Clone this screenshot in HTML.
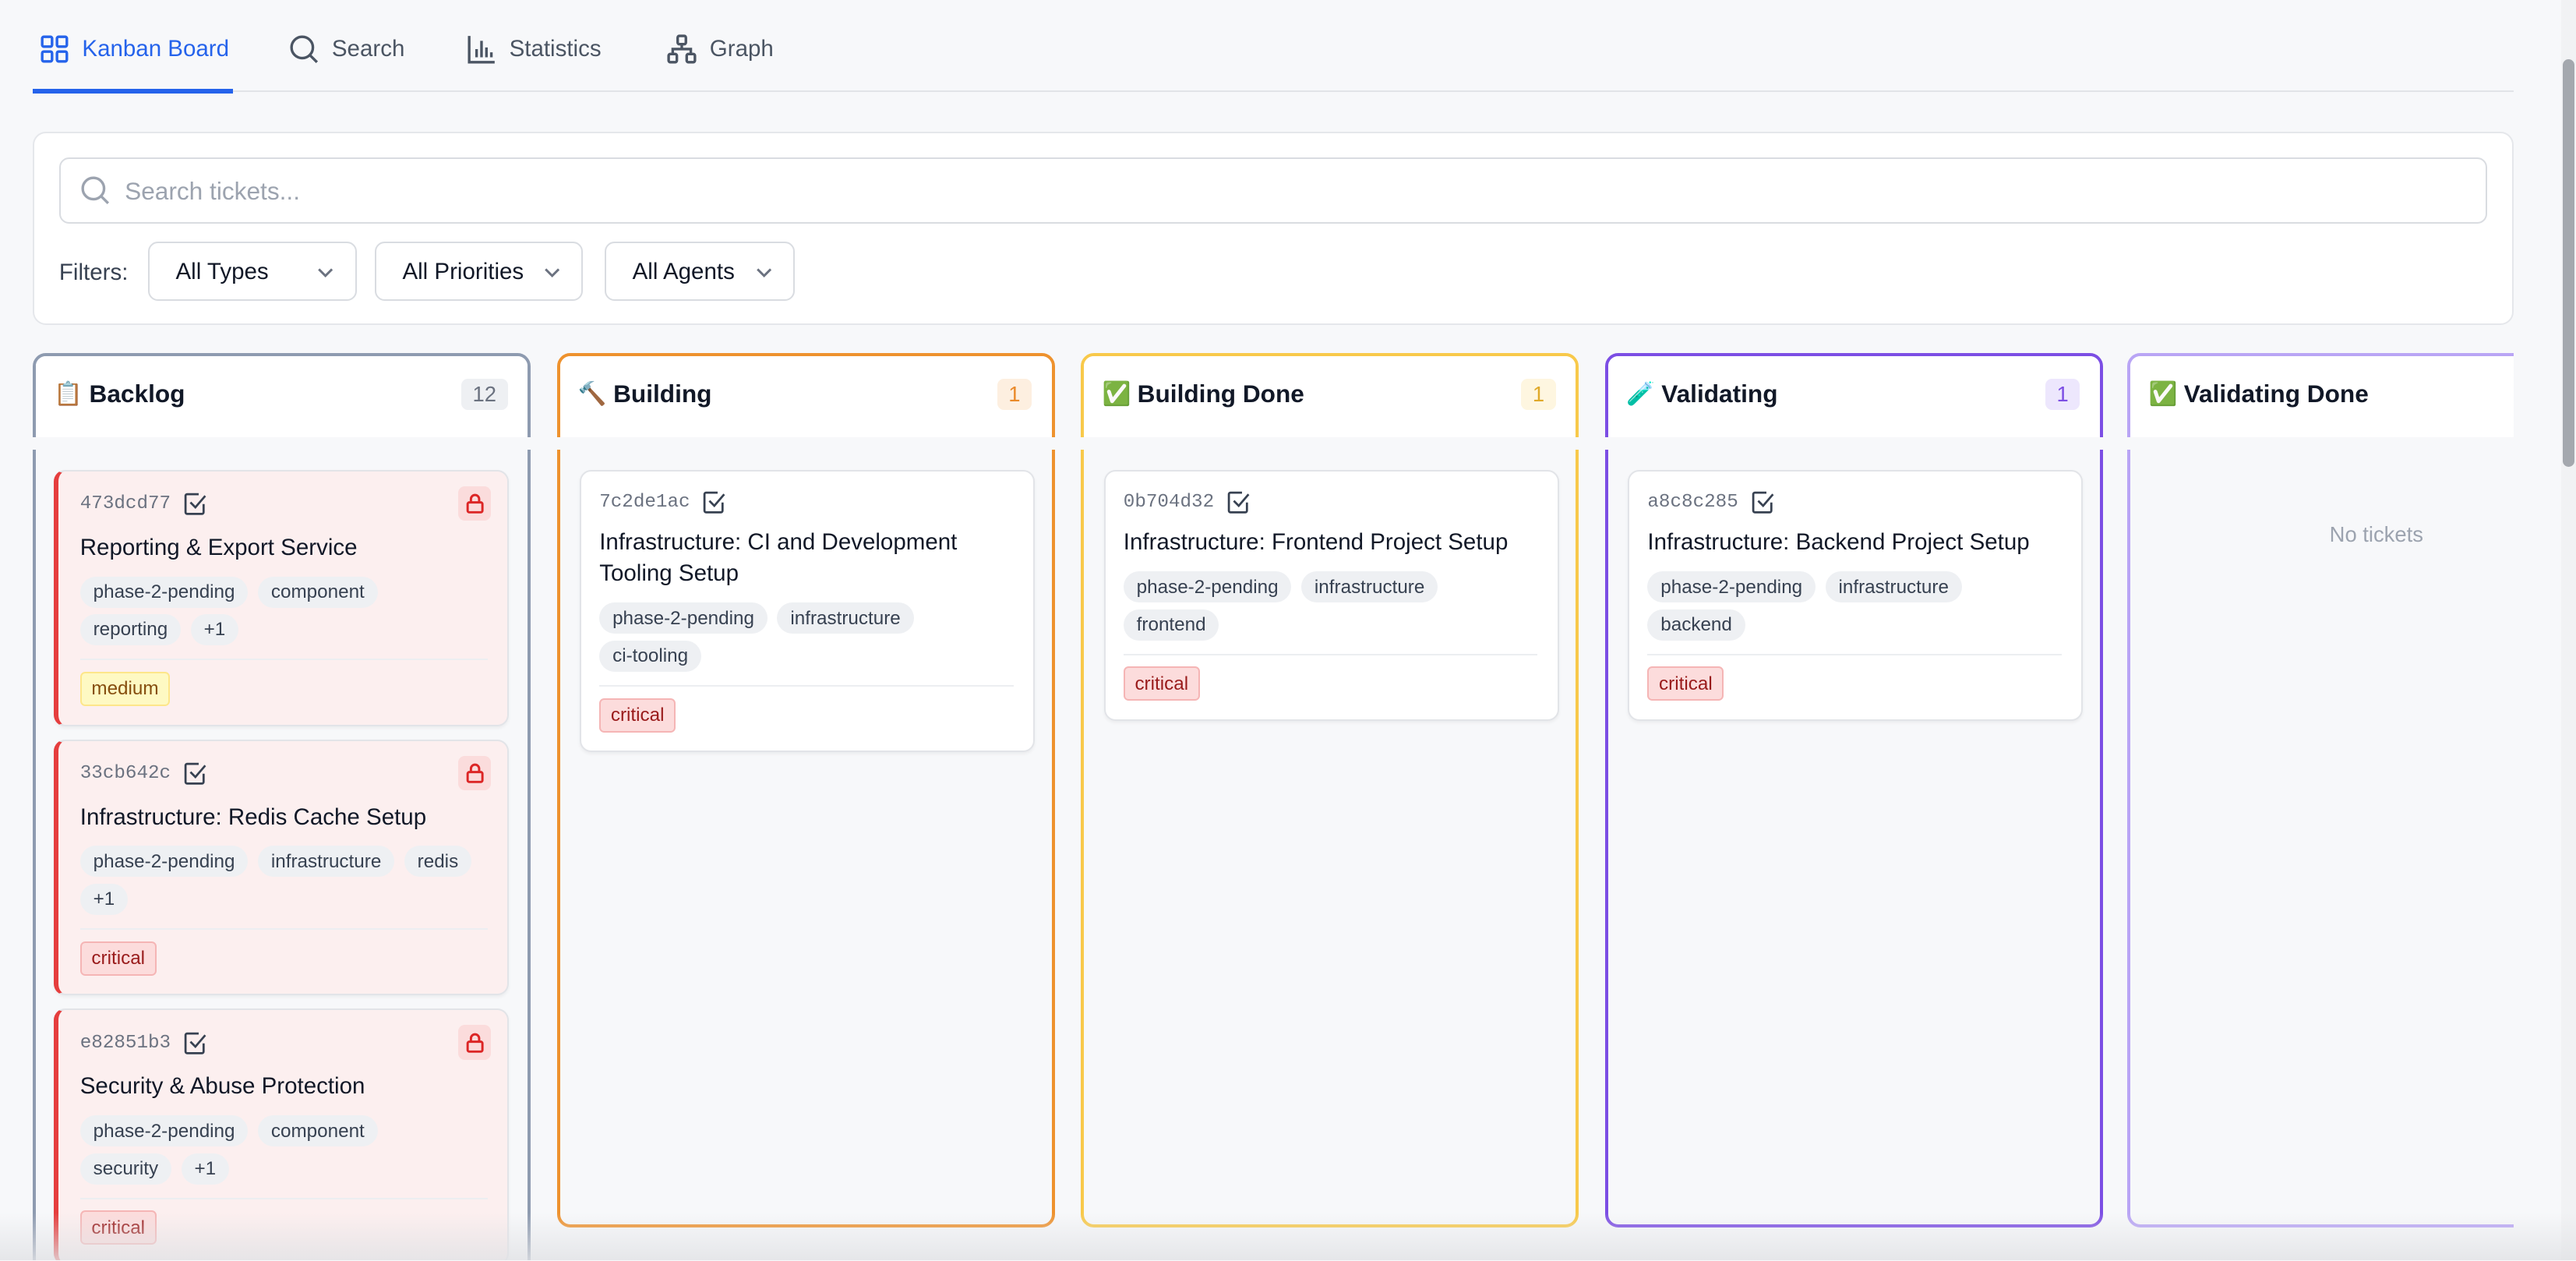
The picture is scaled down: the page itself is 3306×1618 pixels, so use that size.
<!DOCTYPE html>
<html><head><meta charset="utf-8"><style>
*{box-sizing:border-box;margin:0;padding:0}
html,body{width:3306px;height:1618px;overflow:hidden;background:#f7f8fa}
#w{zoom:2.1084;width:1568px;height:767px;position:relative;font-family:"Liberation Sans","Noto Sans CJK SC",sans-serif;color:#111827;background:#f7f8fa;overflow:hidden}
.abs{position:absolute}
.tab{position:absolute;top:19px;height:22px;display:flex;align-items:center;gap:8px;font-size:14px;color:#4b5563}
.tab svg{width:18px;height:18px}
.panel{left:20px;top:80px;width:1510px;height:118px;background:#fff;border:1px solid #e5e7eb;border-radius:8px}
.sel{position:absolute;top:147px;height:36px;border:1px solid #d9dce1;border-radius:6px;background:#fff;font-size:14px;color:#111827;padding:0 0 0 16px;line-height:35px}
.sel svg{position:absolute;right:12px;top:12px;width:12px;height:12px}
.col{position:absolute;top:215px;width:303px;height:532px;border:2px solid;border-radius:8px}
.colh{position:absolute;left:0;right:0;top:0;height:49px;background:#fff;border-radius:6px 6px 0 0;display:flex;align-items:center;padding:0 12px 3px 11px;font-size:15px;font-weight:bold}
.gap{position:absolute;left:-3px;right:-3px;top:49px;height:8px;background:#f7f8fa}
.cnt{margin-left:auto;font-weight:normal;font-size:13px;padding:2px 7px;border-radius:4px}
.emo{font-size:14px;margin-right:4px;font-weight:normal}
.card{position:absolute;left:12px;width:277px;background:#fff;border:1px solid #e2e4e8;border-radius:7px;padding:10px 12px 0 11px;box-shadow:0 1px 2px rgba(0,0,0,.05)}
.card.red{background:#fcefef;border-left:3px solid #e53e3e;left:11px;padding-left:13px;padding-top:11px}
.id{font-family:"Liberation Mono",monospace;font-size:11.5px;color:#6b7280;display:flex;align-items:center;gap:8px;height:18px}
.id svg{width:14px;height:14px}
.lock{position:absolute;right:10px;top:9px;width:20px;height:21px;background:#fbdcdc;border-radius:4px}
.lock svg{position:absolute;left:4px;top:4px;width:12px;height:13px}
.t{font-size:14px;line-height:19px;margin-top:6px;color:#111827}
.red .t{margin-top:8px}
.tags{margin-top:8px;display:flex;flex-wrap:wrap;gap:4px 6px;width:240px}
.tag{font-size:11.5px;color:#374151;background:#eef0f3;border-radius:10px;padding:3px 8px;line-height:13px}
.hr{border-top:1px solid #eceef1;margin-top:8px}
.pri{display:inline-block;font-size:11.5px;padding:3px 6px;border-radius:3px;margin:7px 0 11px;line-height:13px}
.crit{background:#fcdcdc;color:#991b1b;border:1px solid #f5b5b5}
.med{background:#fef9c3;color:#854d0e;border:1px solid #fde68a}
</style></head><body><div id="w">
<div class="tab" style="left:24px;color:#2563eb"><svg viewBox="0 0 18 18" fill="none" stroke="#2563eb" stroke-width="1.6"><rect x="1.5" y="1.5" width="6" height="6" rx="1"/><rect x="10.5" y="1.5" width="6" height="6" rx="1"/><rect x="1.5" y="10.5" width="6" height="6" rx="1"/><rect x="10.5" y="10.5" width="6" height="6" rx="1"/></svg>Kanban Board</div>
<div class="tab" style="left:176px"><svg viewBox="0 0 18 18" fill="none" stroke="#4b5563" stroke-width="1.6"><circle cx="8" cy="8" r="6.5"/><path d="M13 13l4 4"/></svg>Search</div>
<div class="tab" style="left:284px"><svg viewBox="0 0 18 18" fill="none" stroke="#4b5563" stroke-width="1.6"><path d="M1.5 1v16h15.5M6 14V9M9 14V4M12 14V8M15 14V11"/></svg>Statistics</div>
<div class="tab" style="left:406px"><svg viewBox="0 0 18 18" fill="none" stroke="#4b5563" stroke-width="1.6"><rect x="6.5" y="1" width="5" height="5" rx="1"/><rect x="1" y="12" width="5" height="5" rx="1"/><rect x="12" y="12" width="5" height="5" rx="1"/><path d="M9 6v3M3.5 12V9h11v3"/></svg>Graph</div>
<div class="abs" style="left:20px;top:55px;width:1510px;height:1px;background:#e2e4e8"></div>
<div class="abs" style="left:20px;top:54px;width:122px;height:3px;background:#2563eb"></div>

<div class="abs panel"></div>
<div class="abs" style="left:36px;top:96px;width:1478px;height:40px;border:1px solid #d9dce1;border-radius:6px;background:#fff;font-size:15px;color:#9ca3af;padding-left:39px;line-height:39px">Search tickets...
<svg style="position:absolute;left:12px;top:10px;width:18px;height:18px" viewBox="0 0 18 18" fill="none" stroke="#9ca3af" stroke-width="1.6"><circle cx="8" cy="8" r="6.5"/><path d="M13 13l4 4"/></svg></div>
<div class="abs" style="left:36px;top:158px;font-size:14px;color:#374151">Filters:</div>
<div class="sel" style="left:90px;width:127px">All Types<svg viewBox="0 0 12 12" fill="none" stroke="#6b7280" stroke-width="1.4"><path d="M2 4l4 4 4-4"/></svg></div>
<div class="sel" style="left:228px;width:127px">All Priorities<svg viewBox="0 0 12 12" fill="none" stroke="#6b7280" stroke-width="1.4"><path d="M2 4l4 4 4-4"/></svg></div>
<div class="sel" style="left:368px;width:116px">All Agents<svg viewBox="0 0 12 12" fill="none" stroke="#6b7280" stroke-width="1.4"><path d="M2 4l4 4 4-4"/></svg></div>

<!-- Backlog -->
<div class="col" style="left:20px;border-color:#8e9bb0;height:600px">
<div class="colh"><span class="emo">📋</span>Backlog<span class="cnt" style="background:#eef0f3;color:#6b7280">12</span></div><div class="gap"></div>
<div class="card red" style="top:69px;height:156px"><div class="id">473dcd77<svg viewBox="0 0 14 14" fill="none" stroke="#374151" stroke-width="1.3"><path d="M12 7v5a1 1 0 01-1 1H2a1 1 0 01-1-1V2a1 1 0 011-1h7"/><path d="M4 6l3 3 6-7"/></svg></div><div class="lock"><svg viewBox="0 0 12 13" fill="none" stroke="#dc2626" stroke-width="1.4"><rect x="1.5" y="6" width="9" height="6" rx="1"/><path d="M3.5 6V4a2.5 2.5 0 015 0v2"/></svg></div>
<div class="t">Reporting &amp; Export Service</div><div class="tags"><span class="tag">phase-2-pending</span><span class="tag">component</span><span class="tag">reporting</span><span class="tag">+1</span></div><div class="hr"></div><span class="pri med">medium</span></div>
<div class="card red" style="top:233px;height:156px"><div class="id">33cb642c<svg viewBox="0 0 14 14" fill="none" stroke="#374151" stroke-width="1.3"><path d="M12 7v5a1 1 0 01-1 1H2a1 1 0 01-1-1V2a1 1 0 011-1h7"/><path d="M4 6l3 3 6-7"/></svg></div><div class="lock"><svg viewBox="0 0 12 13" fill="none" stroke="#dc2626" stroke-width="1.4"><rect x="1.5" y="6" width="9" height="6" rx="1"/><path d="M3.5 6V4a2.5 2.5 0 015 0v2"/></svg></div>
<div class="t">Infrastructure: Redis Cache Setup</div><div class="tags"><span class="tag">phase-2-pending</span><span class="tag">infrastructure</span><span class="tag">redis</span><span class="tag">+1</span></div><div class="hr"></div><span class="pri crit">critical</span></div>
<div class="card red" style="top:397px;height:156px"><div class="id">e82851b3<svg viewBox="0 0 14 14" fill="none" stroke="#374151" stroke-width="1.3"><path d="M12 7v5a1 1 0 01-1 1H2a1 1 0 01-1-1V2a1 1 0 011-1h7"/><path d="M4 6l3 3 6-7"/></svg></div><div class="lock"><svg viewBox="0 0 12 13" fill="none" stroke="#dc2626" stroke-width="1.4"><rect x="1.5" y="6" width="9" height="6" rx="1"/><path d="M3.5 6V4a2.5 2.5 0 015 0v2"/></svg></div>
<div class="t">Security &amp; Abuse Protection</div><div class="tags"><span class="tag">phase-2-pending</span><span class="tag">component</span><span class="tag">security</span><span class="tag">+1</span></div><div class="hr"></div><span class="pri crit">critical</span></div>
</div>

<!-- Building -->
<div class="col" style="left:339px;border-color:#ee922e">
<div class="colh"><span class="emo">🔨</span>Building<span class="cnt" style="background:#fdefe0;color:#ea8a2a">1</span></div><div class="gap"></div>
<div class="card" style="top:69px;height:172px"><div class="id">7c2de1ac<svg viewBox="0 0 14 14" fill="none" stroke="#374151" stroke-width="1.3"><path d="M12 7v5a1 1 0 01-1 1H2a1 1 0 01-1-1V2a1 1 0 011-1h7"/><path d="M4 6l3 3 6-7"/></svg></div>
<div class="t">Infrastructure: CI and Development Tooling Setup</div><div class="tags"><span class="tag">phase-2-pending</span><span class="tag">infrastructure</span><span class="tag">ci-tooling</span></div><div class="hr"></div><span class="pri crit">critical</span></div>
</div>

<!-- Building Done -->
<div class="col" style="left:658px;border-color:#f8c94a">
<div class="colh"><span class="emo">✅</span>Building Done<span class="cnt" style="background:#fef6e0;color:#e0a92a">1</span></div><div class="gap"></div>
<div class="card" style="top:69px;height:153px"><div class="id">0b704d32<svg viewBox="0 0 14 14" fill="none" stroke="#374151" stroke-width="1.3"><path d="M12 7v5a1 1 0 01-1 1H2a1 1 0 01-1-1V2a1 1 0 011-1h7"/><path d="M4 6l3 3 6-7"/></svg></div>
<div class="t">Infrastructure: Frontend Project Setup</div><div class="tags"><span class="tag">phase-2-pending</span><span class="tag">infrastructure</span><span class="tag">frontend</span></div><div class="hr"></div><span class="pri crit">critical</span></div>
</div>

<!-- Validating -->
<div class="col" style="left:977px;border-color:#7c4ee4">
<div class="colh"><span class="emo">🧪</span>Validating<span class="cnt" style="background:#ede7fd;color:#7c4ee4">1</span></div><div class="gap"></div>
<div class="card" style="top:69px;height:153px"><div class="id">a8c8c285<svg viewBox="0 0 14 14" fill="none" stroke="#374151" stroke-width="1.3"><path d="M12 7v5a1 1 0 01-1 1H2a1 1 0 01-1-1V2a1 1 0 011-1h7"/><path d="M4 6l3 3 6-7"/></svg></div>
<div class="t">Infrastructure: Backend Project Setup</div><div class="tags"><span class="tag">phase-2-pending</span><span class="tag">infrastructure</span><span class="tag">backend</span></div><div class="hr"></div><span class="pri crit">critical</span></div>
</div>

<!-- Validating Done -->
<div class="col" style="left:1295px;border-color:#b9a5f5">
<div class="colh"><span class="emo">✅</span>Validating Done</div><div class="gap"></div>
<div class="abs" style="left:0;right:0;top:101px;text-align:center;font-size:13px;color:#9ca3af">No tickets</div>
</div>
<div class="abs" style="left:1530px;top:0;width:38px;height:767px;background:#f7f8fa"></div>
<div class="abs" style="left:1559px;top:0;width:9px;height:767px;background:#f1f2f4"></div>
<div class="abs" style="left:1560px;top:36px;width:7px;height:248px;background:#a4a8ae;border-radius:4px"></div>
<div class="abs" style="left:0;top:738px;width:1568px;height:29px;background:linear-gradient(rgba(230,231,233,0),rgba(225,226,229,.8))"></div>
</div></body></html>
